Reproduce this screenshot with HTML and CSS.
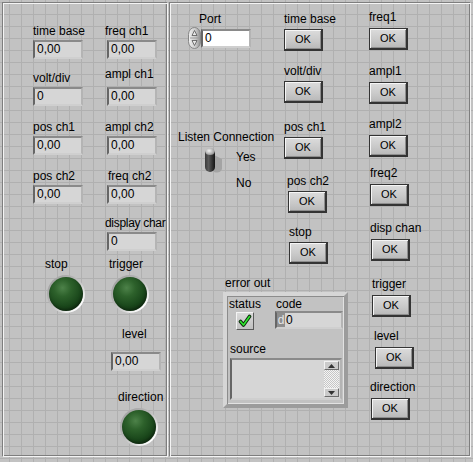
FILE: index.html
```html
<!DOCTYPE html>
<html lang="en">
<head>
<meta charset="utf-8">
<title>Front Panel</title>
<link rel="stylesheet" href="styles.css">
</head>
<body>
<section class="panel left">
  <div class="lrow r1">
    <div class="ctl c1"><span class="lbl">time base</span><div class="num">0,00</div></div>
    <div class="ctl"><span class="lbl">freq ch1</span><div class="num ind">0,00</div></div>
  </div>
  <div class="lrow r2">
    <div class="ctl c1"><span class="lbl">volt/div</span><div class="num">0</div></div>
    <div class="ctl"><span class="lbl raised">ampl ch1</span><div class="num ind">0,00</div></div>
  </div>
  <div class="lrow r3">
    <div class="ctl c1"><span class="lbl">pos ch1</span><div class="num">0,00</div></div>
    <div class="ctl"><span class="lbl">ampl ch2</span><div class="num ind">0,00</div></div>
  </div>
  <div class="lrow r4">
    <div class="ctl c1"><span class="lbl">pos ch2</span><div class="num">0,00</div></div>
    <div class="ctl"><span class="lbl shift">freq ch2</span><div class="num ind">0,00</div></div>
  </div>
  <div class="lrow r5 solo">
    <div class="ctl"><span class="lbl tight">display char</span><div class="num ind">0</div></div>
  </div>
  <div class="lrow r6">
    <div class="ctl c1 led-ctl stop"><span class="lbl">stop</span><div class="bezel"><div class="led"></div></div></div>
    <div class="ctl led-ctl trig"><span class="lbl">trigger</span><div class="bezel"><div class="led"></div></div></div>
  </div>
  <div class="lrow r7 solo">
    <div class="ctl level"><span class="lbl">level</span><div class="num">0,00</div></div>
  </div>
  <div class="lrow r8 solo">
    <div class="ctl led-ctl dir"><span class="lbl">direction</span><div class="bezel"><div class="led"></div></div></div>
  </div>
</section>

<section class="panel right">
  <div class="rleft">
    <div class="toprow">
      <div class="colA">
        <div class="port">
          <span class="lbl">Port</span>
          <div class="portrow">
            <svg class="spin" width="13" height="22" viewBox="0 0 13 22">
              <defs>
                <linearGradient id="sg" x1="0" y1="0" x2="1" y2="0">
                  <stop offset="0" stop-color="#f2f2f2"/>
                  <stop offset="0.6" stop-color="#c8c8c8"/>
                  <stop offset="1" stop-color="#8e8e8e"/>
                </linearGradient>
              </defs>
              <rect x="0.5" y="0.5" width="12" height="21" rx="6" ry="7" fill="url(#sg)" stroke="#858585"/>
              <line x1="2" y1="11" x2="11" y2="11" stroke="#9a9a9a"/>
              <path d="M6.5 3.5 L9 8.5 L4 8.5 Z" fill="#e6e6e6" stroke="#555" stroke-width="0.8"/>
              <path d="M6.5 18.5 L9 13.5 L4 13.5 Z" fill="#e6e6e6" stroke="#555" stroke-width="0.8"/>
            </svg>
            <div class="num white">0</div>
          </div>
        </div>
        <div class="listen">
          <span class="lbl">Listen Connection</span>
          <div class="swrow">
            <svg class="toggle" width="20" height="27" viewBox="0 0 20 27">
              <defs>
                <linearGradient id="tg" x1="0" y1="0" x2="1" y2="0">
                  <stop offset="0" stop-color="#3a3a3a"/>
                  <stop offset="0.35" stop-color="#5a5a5a"/>
                  <stop offset="1" stop-color="#141414"/>
                </linearGradient>
                <radialGradient id="cap" cx="0.4" cy="0.4" r="0.7">
                  <stop offset="0" stop-color="#f4f4f4"/>
                  <stop offset="1" stop-color="#8a8a8a"/>
                </radialGradient>
              </defs>
              <path d="M10 8 L18 12 L18 22 Q16 27 10 25 Z" fill="#a4a4a4"/>
              <rect x="1" y="2" width="10" height="23" rx="5" fill="url(#tg)"/>
              <ellipse cx="6" cy="4.5" rx="4.5" ry="3.5" fill="url(#cap)"/>
            </svg>
            <div class="yesno"><span class="lbl yes">Yes</span><span class="lbl no">No</span></div>
          </div>
        </div>
      </div>
      <div class="colB">
        <div class="item"><span class="lbl">time base</span><div class="btn">OK</div></div>
        <div class="item"><span class="lbl">volt/div</span><div class="btn">OK</div></div>
        <div class="item"><span class="lbl">pos ch1</span><div class="btn">OK</div></div>
        <div class="item"><span class="lbl">pos ch2</span><div class="btn">OK</div></div>
        <div class="item"><span class="lbl">stop</span><div class="btn">OK</div></div>
      </div>
    </div>
    <div class="errwrap">
      <span class="lbl">error out</span>
      <div class="cluster">
        <div class="crow">
          <div class="status">
            <span class="lbl">status</span>
            <div class="chk">
              <svg width="14" height="14" viewBox="0 0 14 14">
                <path d="M2.5 7.5 L5.5 11 L11.5 2.5" fill="none" stroke="#0d2a0d" stroke-width="3.6" stroke-linecap="round" stroke-linejoin="round"/>
                <path d="M2.5 7.5 L5.5 11 L11.5 2.5" fill="none" stroke="#2ee82e" stroke-width="1.6" stroke-linecap="round" stroke-linejoin="round"/>
              </svg>
            </div>
          </div>
          <div class="code">
            <span class="lbl">code</span>
            <div class="codebox"><span class="radix">d</span><span>0</span></div>
          </div>
        </div>
        <div class="source">
          <span class="lbl">source</span>
          <div class="srcbox">
            <div class="srctext"></div>
            <div class="scroll">
              <div class="sbtn"><svg width="7" height="4" viewBox="0 0 7 4"><path d="M3.5 0 L7 4 L0 4 Z" fill="#333"/></svg></div>
              <div class="track"></div>
              <div class="sbtn"><svg width="7" height="4" viewBox="0 0 7 4"><path d="M0 0 L7 0 L3.5 4 Z" fill="#333"/></svg></div>
            </div>
          </div>
        </div>
      </div>
    </div>
  </div>
  <div class="colC">
    <div class="item"><span class="lbl">freq1</span><div class="btn">OK</div></div>
    <div class="item"><span class="lbl">ampl1</span><div class="btn">OK</div></div>
    <div class="item"><span class="lbl">ampl2</span><div class="btn">OK</div></div>
    <div class="item"><span class="lbl">freq2</span><div class="btn">OK</div></div>
    <div class="item"><span class="lbl">disp chan</span><div class="btn">OK</div></div>
    <div class="item"><span class="lbl">trigger</span><div class="btn">OK</div></div>
    <div class="item"><span class="lbl">level</span><div class="btn">OK</div></div>
    <div class="item"><span class="lbl">direction</span><div class="btn">OK</div></div>
  </div>
</section>
</body>
</html>
```

FILE: styles.css
```css
* { box-sizing: border-box; }
html, body { margin: 0; padding: 0; }

body {
  width: 473px;
  height: 462px;
  overflow: hidden;
  font-family: "Liberation Sans", Arial, sans-serif;
  font-size: 12px;
  color: #000;
  background-color: #c2c2c2;
  background-image:
    linear-gradient(to right, #b0b0b0 1px, transparent 1px),
    linear-gradient(to bottom, #b0b0b0 1px, transparent 1px);
  background-size: 12px 12px;
  background-position: 9px 2px;
  display: flex;
  gap: 1px;
  padding: 2px 0 0 2px;
}

.lbl {
  display: block;
  height: 14px;
  line-height: 14px;
  white-space: nowrap;
}
.lbl.tight { letter-spacing: -0.3px; }

/* ---------- panels ---------- */
.panel {
  height: 455px;
  border: 1px solid;
  border-color: #7e7e7e #f4f4f4 #f4f4f4 #7e7e7e;
  box-shadow: inset 1px 1px #f4f4f4, inset -1px -1px #7e7e7e;
}
.panel.left {
  width: 166px;
  padding: 21px 0 0 30px;
}
.panel.right {
  width: 302px;
  display: flex;
}

/* ---------- numeric indicators ---------- */
.num {
  width: 50px;
  height: 19px;
  margin-top: 2px;
  border: 2px solid;
  border-color: #8a8a8a #b4b4b4 #cfcfcf #666;
  background: #d6d6d6;
  padding-left: 2px;
  line-height: 15px;
  font-size: 12px;
}
.num.white {
  background: #fff;
  margin-top: 0;
}
.num.ind { margin-left: 2px; }

/* ---------- left panel rows ---------- */
.lrow { display: flex; align-items: flex-end; }
.lrow.solo { padding-left: 72px; }
.ctl { display: flex; flex-direction: column; align-items: flex-start; }
.c1 { flex: 0 0 72px; }

.r2 { margin-top: 8px; }
.r3 { margin-top: 14px; }
.r4 { margin-top: 14px; }
.r5 { margin-top: 12px; }
.r6 { margin-top: 6px; }
.r7 { margin-top: 14px; }
.r8 { margin-top: 19px; }

.lbl.raised { margin-bottom: 4px; }
.lbl.shift { margin-left: 3px; }

.stop { padding-left: 12px; }
.trig { padding-left: 4px; }
.dir { padding-left: 13px; }

.level .lbl { margin-left: 17px; margin-bottom: 9px; }
.level .num { margin-left: 6px; }

/* ---------- LEDs ---------- */
.bezel {
  width: 38px;
  height: 38px;
  margin: 4px 0 0 2px;
  border-radius: 50%;
  padding: 2px;
  background: linear-gradient(135deg, #9a9a9a 0%, #b6b6b6 40%, #d8d8d8 65%, #ffffff 85%);
}
.led {
  width: 34px;
  height: 34px;
  border-radius: 50%;
  background: radial-gradient(circle at 40% 32%, #4d8249 0%, #2d612b 28%, #1a471b 60%, #0d2b0e 100%);
  box-shadow: inset -1px -2px 3px rgba(0, 0, 0, 0.35);
}

/* ---------- OK buttons ---------- */
.btn {
  width: 39px;
  height: 22px;
  border: 1px solid #343434;
  border-right-width: 2px;
  border-bottom-width: 2px;
  background: linear-gradient(#dcdcdc, #c8c8c8 60%, #b8b8b8);
  box-shadow: inset 1px 1px #f6f6f6, inset -1px -1px #8e8e8e;
  display: flex;
  align-items: center;
  justify-content: center;
  font-size: 11px;
  line-height: 1;
}

/* ---------- right panel ---------- */
.rleft { width: 199px; display: flex; flex-direction: column; }
.toprow { display: flex; }
.colA { width: 114px; padding: 9px 0 0 8px; }
.colB { width: 85px; padding-top: 9px; }
.colC { padding-top: 7px; }

.item { display: flex; flex-direction: column; align-items: flex-start; }
.colB .btn { margin-top: 3px; }
.colC .btn { margin-top: 4px; }

.colB .item:nth-child(2) { margin-top: 13px; }
.colB .item:nth-child(3) { margin-top: 17px; }
.colB .item:nth-child(4) { margin-top: 15px; margin-left: 3px; }
.colB .item:nth-child(4) .btn { margin-left: 1px; }
.colB .item:nth-child(5) { margin-top: 12px; margin-left: 5px; }

.colC .item:nth-child(2) { margin-top: 14px; }
.colC .item:nth-child(3) { margin-top: 13px; }
.colC .item:nth-child(4) { margin-top: 9px; margin-left: 1px; }
.colC .item:nth-child(5) { margin-top: 15px; margin-left: 1px; }
.colC .item:nth-child(5) .btn { margin-left: 1px; }
.colC .item:nth-child(6) { margin-top: 16px; margin-left: 3px; }
.colC .item:nth-child(7) { margin-top: 12px; margin-left: 5px; }
.colC .item:nth-child(7) .btn { margin-left: 1px; }
.colC .item:nth-child(8) { margin-top: 11px; margin-left: 1px; }
.colC .item:nth-child(8) .btn { margin-left: 1px; }

/* Port */
.port { margin-left: 10px; }
.port .lbl { margin-left: 11px; }
.portrow { display: flex; align-items: center; margin-top: 1px; }
.spin { display: block; }

/* Listen connection */
.listen { margin-top: 81px; }
.swrow { display: flex; margin: 3px 0 0 26px; }
.toggle { display: block; }
.yesno { margin-left: 12px; }
.yes { margin-top: 3px; }
.no { margin-top: 12px; }

/* error cluster */
.errwrap { margin: 12px 0 0 53px; }
.errwrap > .lbl { margin-left: 2px; }
.cluster {
  width: 125px;
  height: 116px;
  margin-top: 2px;
  border: 4px solid;
  border-color: #d6d6d6 #9c9c9c #9c9c9c #d6d6d6;
  box-shadow: inset 1px 1px #8c8c8c, inset -1px -1px #e2e2e2;
  background: #c2c2c2;
}
.crow { display: flex; padding-top: 1px; }
.status { width: 48px; padding-left: 2px; }
.chk {
  width: 18px;
  height: 18px;
  margin: 1px 0 0 7px;
  border: 1px solid;
  border-color: #f4f4f4 #5a5a5a #5a5a5a #f4f4f4;
  background: linear-gradient(#dadada, #c0c0c0);
  display: flex;
  align-items: center;
  justify-content: center;
}
.chk svg { display: block; }
.code .lbl { margin-left: 1px; }
.codebox {
  width: 68px;
  height: 18px;
  border: 2px solid;
  border-color: #8a8a8a #b4b4b4 #cfcfcf #666;
  background: #d6d6d6;
  display: flex;
  align-items: stretch;
  line-height: 14px;
}
.radix {
  width: 8px;
  background: #8e8e8e;
  color: #e6e6e6;
  text-align: center;
  margin-right: 1px;
}
.source { margin-top: 12px; padding-left: 3px; }
.srcbox {
  width: 112px;
  height: 42px;
  margin-top: 2px;
  border: 2px solid;
  border-color: #8a8a8a #b4b4b4 #cfcfcf #666;
  background: #d6d6d6;
  display: flex;
}
.srctext { flex: 1; }
.scroll {
  width: 16px;
  display: flex;
  flex-direction: column;
  padding: 1px 1px 1px 0;
}
.sbtn {
  height: 9px;
  border: 1px solid;
  border-color: #f2f2f2 #6c6c6c #6c6c6c #f2f2f2;
  background: #cacaca;
  display: flex;
  align-items: center;
  justify-content: center;
}
.sbtn svg { display: block; }
.track {
  flex: 1;
  background: repeating-conic-gradient(#f4f4f4 0 25%, #c6c6c6 0 50%) 0 0 / 2px 2px;
}
```
